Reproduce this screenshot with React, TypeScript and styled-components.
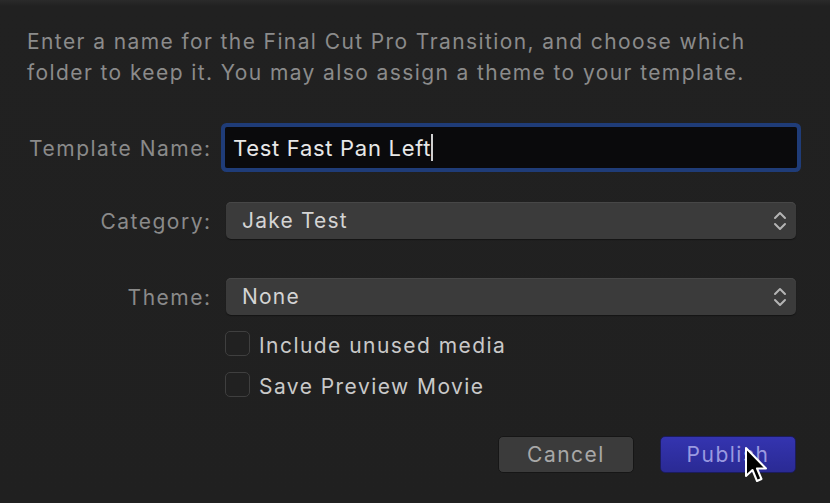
import styled, { createGlobalStyle } from "styled-components";

const Global = createGlobalStyle`
  html, body {
    margin: 0;
    padding: 0;
    background: #202020;
  }
  body {
    font-family: Inter, "Liberation Sans", sans-serif;
  }
`;

const Chevrons = () => (
  <svg width="14" height="22" viewBox="0 0 14 22">
    <path d="M2 8 L7 3 L12 8" fill="none" stroke="#b4b4b4" strokeWidth="2" strokeLinecap="round" strokeLinejoin="round" />
    <path d="M2 14 L7 19 L12 14" fill="none" stroke="#b4b4b4" strokeWidth="2" strokeLinecap="round" strokeLinejoin="round" />
  </svg>
);

const Pointer = () => (
  <svg width="26" height="38" viewBox="0 0 26 38">
    <path
      d="M2 2 L2 30 L8.5 24 L13 35 L17.5 33 L13 22.5 L22 22.5 Z"
      fill="#000"
      stroke="#fff"
      strokeWidth="2"
      strokeLinejoin="round"
    />
  </svg>
);

const App = () => {
  return (
    <Dialog>
      <Global />
      <Intro>
        Enter a name for the Final Cut Pro Transition, and choose which
        <br />
        folder to keep it. You may also assign a theme to your template.
      </Intro>

      <Form>
        <Label>Template Name:</Label>
        <NameField>
          <NameText>Test Fast Pan Left</NameText>
          <Caret />
        </NameField>

        <Label $top={34}>Category:</Label>
        <Select $top={34}>
          <span>Jake Test</span>
          <Chevrons />
        </Select>

        <Label $top={39}>Theme:</Label>
        <Select $top={39}>
          <span>None</span>
          <Chevrons />
        </Select>

        <span />
        <Checks>
          <CheckRow>
            <Box />
            <CheckText>Include unused media</CheckText>
          </CheckRow>
          <CheckRow>
            <Box />
            <CheckText>Save Preview Movie</CheckText>
          </CheckRow>
        </Checks>
      </Form>

      <Footer>
        <Button>Cancel</Button>
        <Button $primary>
          Publish
          <Cursor>
            <Pointer />
          </Cursor>
        </Button>
      </Footer>
    </Dialog>
  );
};

export default App;

const Dialog = styled.div`
  width: 830px;
  height: 503px;
  box-sizing: border-box;
  background: linear-gradient(#2a2a2a 0px, #212121 6px, #202020 100%);
  padding: 26px 34px 0 27px;
  overflow: hidden;
`;

const Intro = styled.p`
  margin: 0;
  font-size: 21px;
  line-height: 31px;
  color: #8b8b8b;
  letter-spacing: 1.4px;
  white-space: nowrap;
`;

const Form = styled.div`
  display: grid;
  grid-template-columns: 183px 1fr;
  column-gap: 16px;
  align-items: center;
  margin-top: 39px;
`;

const Label = styled.div<{ $top?: number }>`
  text-align: right;
  font-size: 21px;
  letter-spacing: 1.5px;
  margin-right: -1.5px;
  color: #8a8a8a;
  margin-top: ${(p) => p.$top ?? 0}px;
  padding-top: 2px;
  white-space: nowrap;
`;

const NameField = styled.div`
  height: 41px;
  margin-left: -1px;
  margin-right: -1px;
  display: flex;
  align-items: center;
  padding-left: 8px;
  background: #0a0a0c;
  border-radius: 2px;
  box-shadow: 0 0 0 4px #1f3c78;
`;

const NameText = styled.span`
  font-size: 22px;
  letter-spacing: 0.7px;
  color: #e8e8e8;
`;

const Caret = styled.span`
  width: 2px;
  height: 27px;
  background: #cfcfcf;
`;

const Select = styled.div<{ $top?: number }>`
  height: 37px;
  box-sizing: border-box;
  margin-top: ${(p) => p.$top ?? 0}px;
  display: flex;
  align-items: center;
  justify-content: space-between;
  padding: 0 9px 0 16px;
  background: #3b3b3b;
  border-radius: 5px;
  box-shadow: inset 0 1px 0 #474747, 0 1px 1px #141414;
  font-size: 21px;
  letter-spacing: 1.2px;
  color: #d4d4d4;
`;

const Checks = styled.div`
  display: flex;
  flex-direction: column;
  gap: 16px;
  margin-top: 16px;
`;

const CheckRow = styled.div`
  display: flex;
  align-items: center;
  gap: 9px;
  margin-left: -1px;
`;

const Box = styled.div`
  width: 25px;
  height: 25px;
  box-sizing: border-box;
  border: 1.5px solid #3f3f3f;
  border-radius: 5px;
  background: #212121;
`;

const CheckText = styled.span`
  font-size: 21px;
  line-height: 25px;
  letter-spacing: 1.45px;
  color: #c9c9c9;
  position: relative;
  top: 2px;
`;

const Footer = styled.div`
  display: flex;
  justify-content: flex-end;
  gap: 26px;
  margin-top: 39px;
`;

const Button = styled.div<{ $primary?: boolean }>`
  position: relative;
  width: 136px;
  height: 37px;
  box-sizing: border-box;
  display: flex;
  align-items: center;
  justify-content: center;
  border-radius: 5px;
  font-size: 21px;
  letter-spacing: 1.5px;
  color: ${(p) => (p.$primary ? "#9a9ae0" : "#a8a8a8")};
  background: ${(p) =>
    p.$primary ? "linear-gradient(#3434b0, #2a2a94)" : "#3b3b3b"};
  border: 1px solid ${(p) => (p.$primary ? "#1c1c5c" : "#161616")};
`;

const Cursor = styled.div`
  position: absolute;
  left: 83px;
  top: 9px;
  line-height: 0;
`;
